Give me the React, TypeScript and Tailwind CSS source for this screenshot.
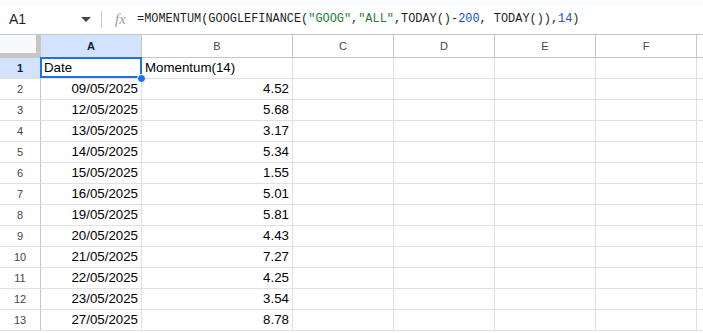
import React from "react";

const data: [string, string][] = [
  ["09/05/2025", "4.52"],
  ["12/05/2025", "5.68"],
  ["13/05/2025", "3.17"],
  ["14/05/2025", "5.34"],
  ["15/05/2025", "1.55"],
  ["16/05/2025", "5.01"],
  ["19/05/2025", "5.81"],
  ["20/05/2025", "4.43"],
  ["21/05/2025", "7.27"],
  ["22/05/2025", "4.25"],
  ["23/05/2025", "3.54"],
  ["27/05/2025", "8.78"],
];

const cols = [
  { l: "A", w: "w-[101px]" },
  { l: "B", w: "w-[151px]" },
  { l: "C", w: "w-[101px]" },
  { l: "D", w: "w-[101px]" },
  { l: "E", w: "w-[101px]" },
  { l: "F", w: "w-[101px]" },
];

function RowHeader({ n, active }: { n: number; active?: boolean }) {
  return (
    <div
      className={`w-[41px] shrink-0 h-full flex items-center justify-center border-r border-[#c4c7c5] text-[11px] ${
        active ? "bg-[#d3e3fd] font-bold text-[#0b1f3f]" : "bg-white text-[#444746]"
      }`}
    >
      {n}
    </div>
  );
}

export default function App() {
  return (
    <div
      className="w-[703px] h-[333px] overflow-hidden bg-white text-black"
      style={{ fontFamily: '"Liberation Sans", Arial, sans-serif' }}
    >
      <div className="h-[5px] bg-[#f9fbfd]" />
      {/* formula bar */}
      <div className="h-[29px] flex items-center bg-white">
        <div className="w-[74px] pl-[9px] text-[14px] text-[#1f1f1f]">A1</div>
        <div className="w-[27px] flex items-center justify-start pl-[7px]">
          <svg width="10" height="5" viewBox="0 0 10 5">
            <path d="M0 0 L10 0 L5 5 Z" fill="#444746" />
          </svg>
        </div>
        <div className="w-px h-[17px] bg-[#c4c7c5]" />
        <div
          className="w-[35px] pl-[13px] text-[15px] italic text-[#a0a0a0]"
          style={{ fontFamily: '"Liberation Serif", serif' }}
        >
          fx
        </div>
        <div
          className="text-[11.9px] text-[#1f1f1f] whitespace-pre"
          style={{ fontFamily: '"Liberation Mono", monospace' }}
        >
          =MOMENTUM(GOOGLEFINANCE(<span className="text-[#188038]">"GOOG"</span>,
          <span className="text-[#188038]">"ALL"</span>,TODAY()-
          <span className="text-[#1155cc]">200</span>, TODAY()),
          <span className="text-[#1155cc]">14</span>)
        </div>
      </div>
      {/* column headers */}
      <div className="h-[24px] flex border-t border-[#c4c7c5] border-b">
        <div className="w-[41px] shrink-0 h-full bg-[#c4c7c5] flex flex-col">
          <div className="w-[36px] h-[18px] bg-[#f8f9fa]" />
        </div>
        {cols.map((c, i) => (
          <div
            key={c.l}
            className={`${c.w} shrink-0 h-full flex items-center justify-center border-r border-[#c4c7c5] text-[11px] ${
              i === 0 ? "bg-[#d3e3fd] font-bold text-[#0b1f3f]" : "bg-white text-[#444746]"
            }`}
          >
            {c.l}
          </div>
        ))}
        <div className="flex-1 bg-white" />
      </div>
      {/* row 1 */}
      <div className="h-[21px] flex border-b border-[#e1e1e1] relative">
        <RowHeader n={1} active />
        <div className="w-[101px] shrink-0 h-full border-r border-[#e1e1e1] flex items-center pl-[3px] text-[13.3px] relative">
          <div className="absolute -top-px -left-px w-[102px] h-[21px] border-2 border-[#1a73e8]" />
          <span className="relative">Date</span>
          <div className="absolute right-[-5px] bottom-[-5px] w-[9px] h-[9px] rounded-full bg-[#1a73e8] border border-white z-10" />
        </div>
        <div className="w-[151px] shrink-0 h-full border-r border-[#e1e1e1] flex items-center pl-[3px] text-[13.3px]">
          Momentum(14)
        </div>
        {[0, 1, 2, 3].map((k) => (
          <div key={k} className="w-[101px] shrink-0 h-full border-r border-[#e1e1e1]" />
        ))}
      </div>
      {data.map(([d, v], i) => (
        <div key={i} className="h-[21px] flex border-b border-[#e1e1e1]">
          <RowHeader n={i + 2} />
          <div className="w-[101px] shrink-0 h-full border-r border-[#e1e1e1] flex items-center justify-end pr-[3px] text-[13.3px]">
            {d}
          </div>
          <div className="w-[151px] shrink-0 h-full border-r border-[#e1e1e1] flex items-center justify-end pr-[3px] text-[13.3px]">
            {v}
          </div>
          {[0, 1, 2, 3].map((k) => (
            <div key={k} className="w-[101px] shrink-0 h-full border-r border-[#e1e1e1]" />
          ))}
        </div>
      ))}
    </div>
  );
}
